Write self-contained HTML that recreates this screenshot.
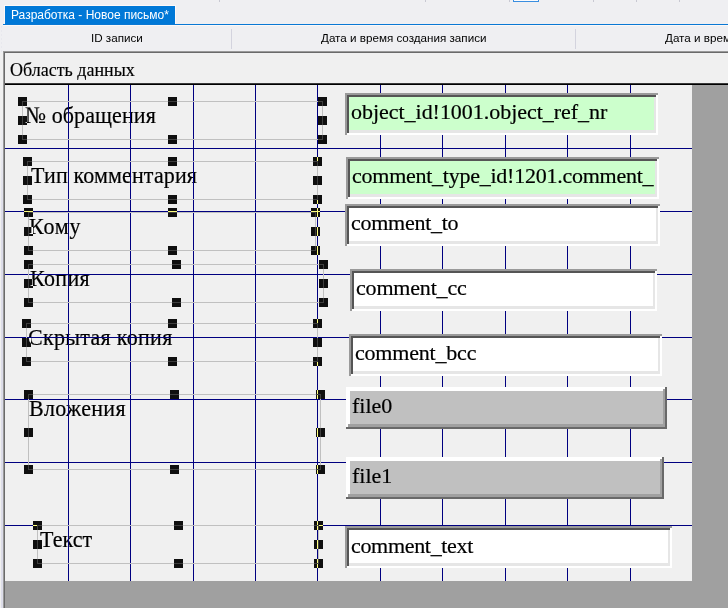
<!DOCTYPE html>
<html><head><meta charset="utf-8"><style>
*{margin:0;padding:0;box-sizing:border-box}
html,body{width:728px;height:608px;overflow:hidden;background:#f0f0f0;position:relative}
.a{position:absolute}
.ui{font-family:"Liberation Sans",sans-serif;font-size:12px;line-height:14px;white-space:nowrap;color:#000}
.sf{font-family:"Liberation Serif",serif;font-size:22px;line-height:22px;white-space:nowrap;color:#000;transform:scaleY(1.08);transform-origin:0 18px;-webkit-text-stroke:0.2px #000}
.sf2{font-family:"Liberation Serif",serif;font-size:22px;line-height:22px;white-space:nowrap;color:#000;-webkit-text-stroke:0.2px #000}
.gv{position:absolute;width:1px;background:#000080}
.gh{position:absolute;height:1px;background:#000080}
.ob{position:absolute;border:1px solid #c0c0c0}
.h{position:absolute;width:9px;height:9px;background:#fff;mix-blend-mode:difference}
.f{position:absolute;background:#fff;box-shadow:inset 2px 2px 0 #9a9a9a}
.f>i{position:absolute;left:2px;top:2px;right:2px;bottom:2px;background:#e6e6e6;box-shadow:inset 2px 2px 0 #555}
.f>i>b{position:absolute;left:2px;top:2px;right:2px;bottom:3px}
.bt{position:absolute;background:#fff;box-shadow:inset -2px -2px 0 #696969}
.bt>i{position:absolute;left:2px;top:2px;right:2px;bottom:2px;background:#fff;box-shadow:inset -2px -3px 0 #a0a0a0}
.bt>i>b{position:absolute;left:2px;top:2px;right:2px;bottom:3px;background:#c0c0c0}
</style></head><body>

<div class="a" style="left:0;top:0;width:728px;height:24px;background:#efeff2"></div>
<div class="a" style="left:219px;top:0;width:1px;height:2px;background:#c8c8d2"></div>
<div class="a" style="left:425px;top:0;width:1px;height:2px;background:#c8c8d2"></div>
<div class="a" style="left:509px;top:0;width:1px;height:2px;background:#c8c8d2"></div>
<div class="a" style="left:593px;top:0;width:1px;height:2px;background:#c8c8d2"></div>
<div class="a" style="left:636px;top:0;width:1px;height:2px;background:#c8c8d2"></div>
<div class="a" style="left:679px;top:0;width:1px;height:2px;background:#c8c8d2"></div>
<div class="a" style="left:513px;top:0;width:26px;height:2px;border:1px solid #3a8ee0;border-top:0;background:#fbfbfd"></div>
<div class="a" style="left:4px;top:5px;width:172px;height:20px;background:#fdf8f8"></div>
<div class="a" style="left:5px;top:6px;width:170px;height:19px;background:#0078d7"></div>
<div class="a ui" style="left:11px;top:8px;color:#fff;font-size:12px">Разработка - Новое письмо*</div>
<div class="a" style="left:3px;top:24px;width:725px;height:1px;background:#0a78d4"></div>
<div class="a" style="left:3px;top:25px;width:725px;height:1px;background:#fbf8f8"></div>
<div class="a" style="left:0;top:26px;width:728px;height:25px;background:#efeff2"></div>
<div class="a ui" style="left:91px;top:31px;font-size:11.65px">ID записи</div>
<div class="a ui" style="left:321px;top:31px;font-size:11.65px">Дата и время создания записи</div>
<div class="a ui" style="left:665px;top:31px;font-size:11.65px">Дата и время создания записи</div>
<div class="a" style="left:231px;top:29px;width:1px;height:20px;background:#d3d3de"></div>
<div class="a" style="left:575px;top:29px;width:1px;height:20px;background:#d3d3de"></div>
<div class="a" style="left:1px;top:26px;width:1px;height:27px;background:repeating-linear-gradient(#e8e8ee 0 2px,#efeff2 2px 4px)"></div>
<div class="a" style="left:1px;top:120px;width:2px;height:488px;background:linear-gradient(#efeff2 0,#dcdce8 100px,#dcdce8 100%)"></div>
<div class="a" style="left:3px;top:51px;width:725px;height:1px;background:#9a9a9a"></div>
<div class="a" style="left:3px;top:52px;width:725px;height:1px;background:#6a6a6a"></div>
<div class="a" style="left:3px;top:51px;width:1px;height:557px;background:#9a9a9a"></div>
<div class="a" style="left:4px;top:52px;width:1px;height:556px;background:#6a6a6a"></div>
<div class="a" style="left:5px;top:53px;width:723px;height:30px;background:#f0f0f0"></div>
<div class="a" style="font-family:'Liberation Serif',serif;font-size:18px;line-height:18px;white-space:nowrap;left:10px;top:61px;color:#000;-webkit-text-stroke:0.15px #000">Область данных</div>
<div class="a" style="left:5px;top:83px;width:723px;height:1px;background:#3a3a3a"></div>
<div class="a" style="left:5px;top:84px;width:723px;height:1px;background:#000"></div>
<div class="a" style="left:5px;top:85px;width:687px;height:496px;background:#f0f0f0"></div>
<div class="a" style="left:692px;top:85px;width:36px;height:523px;background:#a0a0a0"></div>
<div class="a" style="left:5px;top:581px;width:723px;height:27px;background:#a0a0a0"></div>
<div class="a sf" style="left:25px;top:105px;letter-spacing:0.1px">№ обращения</div>
<div class="a sf" style="left:31px;top:165px;letter-spacing:0.14px">Тип комментария</div>
<div class="a sf" style="left:29px;top:216px;letter-spacing:0.8px">Кому</div>
<div class="a sf" style="left:30px;top:268px;letter-spacing:0.37px">Копия</div>
<div class="a sf" style="left:28px;top:327px;letter-spacing:0.3px">Скрытая копия</div>
<div class="a sf" style="left:29px;top:398px;letter-spacing:0.3px">Вложения</div>
<div class="a sf" style="left:40px;top:529px;letter-spacing:0.05px">Текст</div>
<div class="gv" style="left:68px;top:85px;height:496px"></div>
<div class="gv" style="left:130px;top:85px;height:496px"></div>
<div class="gv" style="left:193px;top:85px;height:496px"></div>
<div class="gv" style="left:255px;top:85px;height:496px"></div>
<div class="gv" style="left:317px;top:85px;height:496px"></div>
<div class="gv" style="left:380px;top:85px;height:496px"></div>
<div class="gv" style="left:442px;top:85px;height:496px"></div>
<div class="gv" style="left:505px;top:85px;height:496px"></div>
<div class="gv" style="left:567px;top:85px;height:496px"></div>
<div class="gv" style="left:630px;top:85px;height:496px"></div>
<div class="gh" style="left:5px;top:148px;width:687px"></div>
<div class="gh" style="left:5px;top:211px;width:687px"></div>
<div class="gh" style="left:5px;top:274px;width:687px"></div>
<div class="gh" style="left:5px;top:337px;width:687px"></div>
<div class="gh" style="left:5px;top:399px;width:687px"></div>
<div class="gh" style="left:5px;top:462px;width:687px"></div>
<div class="gh" style="left:5px;top:525px;width:687px"></div>
<div class="ob" style="left:22px;top:101px;width:301px;height:39px"></div>
<div class="ob" style="left:27px;top:161px;width:291px;height:39px"></div>
<div class="ob" style="left:28px;top:212px;width:288px;height:39px"></div>
<div class="ob" style="left:28px;top:264px;width:296px;height:39px"></div>
<div class="ob" style="left:26px;top:323px;width:292px;height:39px"></div>
<div class="ob" style="left:28px;top:394px;width:293px;height:76px"></div>
<div class="ob" style="left:37px;top:525px;width:282px;height:39px"></div>
<div class="f" style="left:345px;top:93px;width:313px;height:42px"><i><b style="background:#ccffcc"></b></i></div>
<div class="a" style="left:349px;top:97px;width:305px;height:34px;overflow:hidden"><div class="a sf2" style="left:2px;top:4px;letter-spacing:-0.03px">object_id!1001.object_ref_nr</div></div>
<div class="f" style="left:346px;top:157px;width:313px;height:42px"><i><b style="background:#ccffcc"></b></i></div>
<div class="a" style="left:350px;top:161px;width:305px;height:34px;overflow:hidden"><div class="a sf2" style="left:2px;top:4px;letter-spacing:-0.25px">comment_type_id!1201.comment_</div></div>
<div class="f" style="left:345px;top:204px;width:315px;height:42px"><i><b style="background:#fff"></b></i></div>
<div class="a" style="left:349px;top:208px;width:307px;height:34px;overflow:hidden"><div class="a sf2" style="left:2px;top:4px;letter-spacing:-0.27px">comment_to</div></div>
<div class="f" style="left:350px;top:269px;width:307px;height:42px"><i><b style="background:#fff"></b></i></div>
<div class="a" style="left:354px;top:273px;width:299px;height:34px;overflow:hidden"><div class="a sf2" style="left:2px;top:4px;letter-spacing:-0.18px">comment_cc</div></div>
<div class="f" style="left:349px;top:334px;width:313px;height:42px"><i><b style="background:#fff"></b></i></div>
<div class="a" style="left:353px;top:338px;width:305px;height:34px;overflow:hidden"><div class="a sf2" style="left:2px;top:4px;letter-spacing:-0.2px">comment_bcc</div></div>
<div class="bt" style="left:346px;top:387px;width:321px;height:42px"><i><b></b></i></div>
<div class="a" style="left:350px;top:391px;width:313px;height:34px;overflow:hidden"><div class="a sf2" style="left:2px;top:4px;letter-spacing:0px">file0</div></div>
<div class="bt" style="left:346px;top:457px;width:318px;height:42px"><i><b></b></i></div>
<div class="a" style="left:350px;top:461px;width:310px;height:34px;overflow:hidden"><div class="a sf2" style="left:2px;top:4px;letter-spacing:0px">file1</div></div>
<div class="f" style="left:345px;top:526px;width:327px;height:42px"><i><b style="background:#fff"></b></i></div>
<div class="a" style="left:349px;top:530px;width:319px;height:34px;overflow:hidden"><div class="a sf2" style="left:2px;top:5px;letter-spacing:-0.32px">comment_text</div></div>
<div class="h" style="left:18px;top:97px"></div>
<div class="h" style="left:168px;top:97px"></div>
<div class="h" style="left:318px;top:97px"></div>
<div class="h" style="left:18px;top:116px"></div>
<div class="h" style="left:318px;top:116px"></div>
<div class="h" style="left:18px;top:135px"></div>
<div class="h" style="left:168px;top:135px"></div>
<div class="h" style="left:318px;top:135px"></div>
<div class="h" style="left:23px;top:157px"></div>
<div class="h" style="left:168px;top:157px"></div>
<div class="h" style="left:313px;top:157px"></div>
<div class="h" style="left:23px;top:176px"></div>
<div class="h" style="left:313px;top:176px"></div>
<div class="h" style="left:23px;top:195px"></div>
<div class="h" style="left:168px;top:195px"></div>
<div class="h" style="left:313px;top:195px"></div>
<div class="h" style="left:24px;top:208px"></div>
<div class="h" style="left:168px;top:208px"></div>
<div class="h" style="left:311px;top:208px"></div>
<div class="h" style="left:24px;top:227px"></div>
<div class="h" style="left:311px;top:227px"></div>
<div class="h" style="left:24px;top:246px"></div>
<div class="h" style="left:168px;top:246px"></div>
<div class="h" style="left:311px;top:246px"></div>
<div class="h" style="left:24px;top:260px"></div>
<div class="h" style="left:172px;top:260px"></div>
<div class="h" style="left:319px;top:260px"></div>
<div class="h" style="left:24px;top:279px"></div>
<div class="h" style="left:319px;top:279px"></div>
<div class="h" style="left:24px;top:298px"></div>
<div class="h" style="left:172px;top:298px"></div>
<div class="h" style="left:319px;top:298px"></div>
<div class="h" style="left:22px;top:319px"></div>
<div class="h" style="left:168px;top:319px"></div>
<div class="h" style="left:313px;top:319px"></div>
<div class="h" style="left:22px;top:338px"></div>
<div class="h" style="left:313px;top:338px"></div>
<div class="h" style="left:22px;top:357px"></div>
<div class="h" style="left:168px;top:357px"></div>
<div class="h" style="left:313px;top:357px"></div>
<div class="h" style="left:24px;top:390px"></div>
<div class="h" style="left:170px;top:390px"></div>
<div class="h" style="left:316px;top:390px"></div>
<div class="h" style="left:24px;top:428px"></div>
<div class="h" style="left:316px;top:428px"></div>
<div class="h" style="left:24px;top:465px"></div>
<div class="h" style="left:170px;top:465px"></div>
<div class="h" style="left:316px;top:465px"></div>
<div class="h" style="left:33px;top:521px"></div>
<div class="h" style="left:174px;top:521px"></div>
<div class="h" style="left:314px;top:521px"></div>
<div class="h" style="left:33px;top:540px"></div>
<div class="h" style="left:314px;top:540px"></div>
<div class="h" style="left:33px;top:559px"></div>
<div class="h" style="left:174px;top:559px"></div>
<div class="h" style="left:314px;top:559px"></div>
</body></html>
